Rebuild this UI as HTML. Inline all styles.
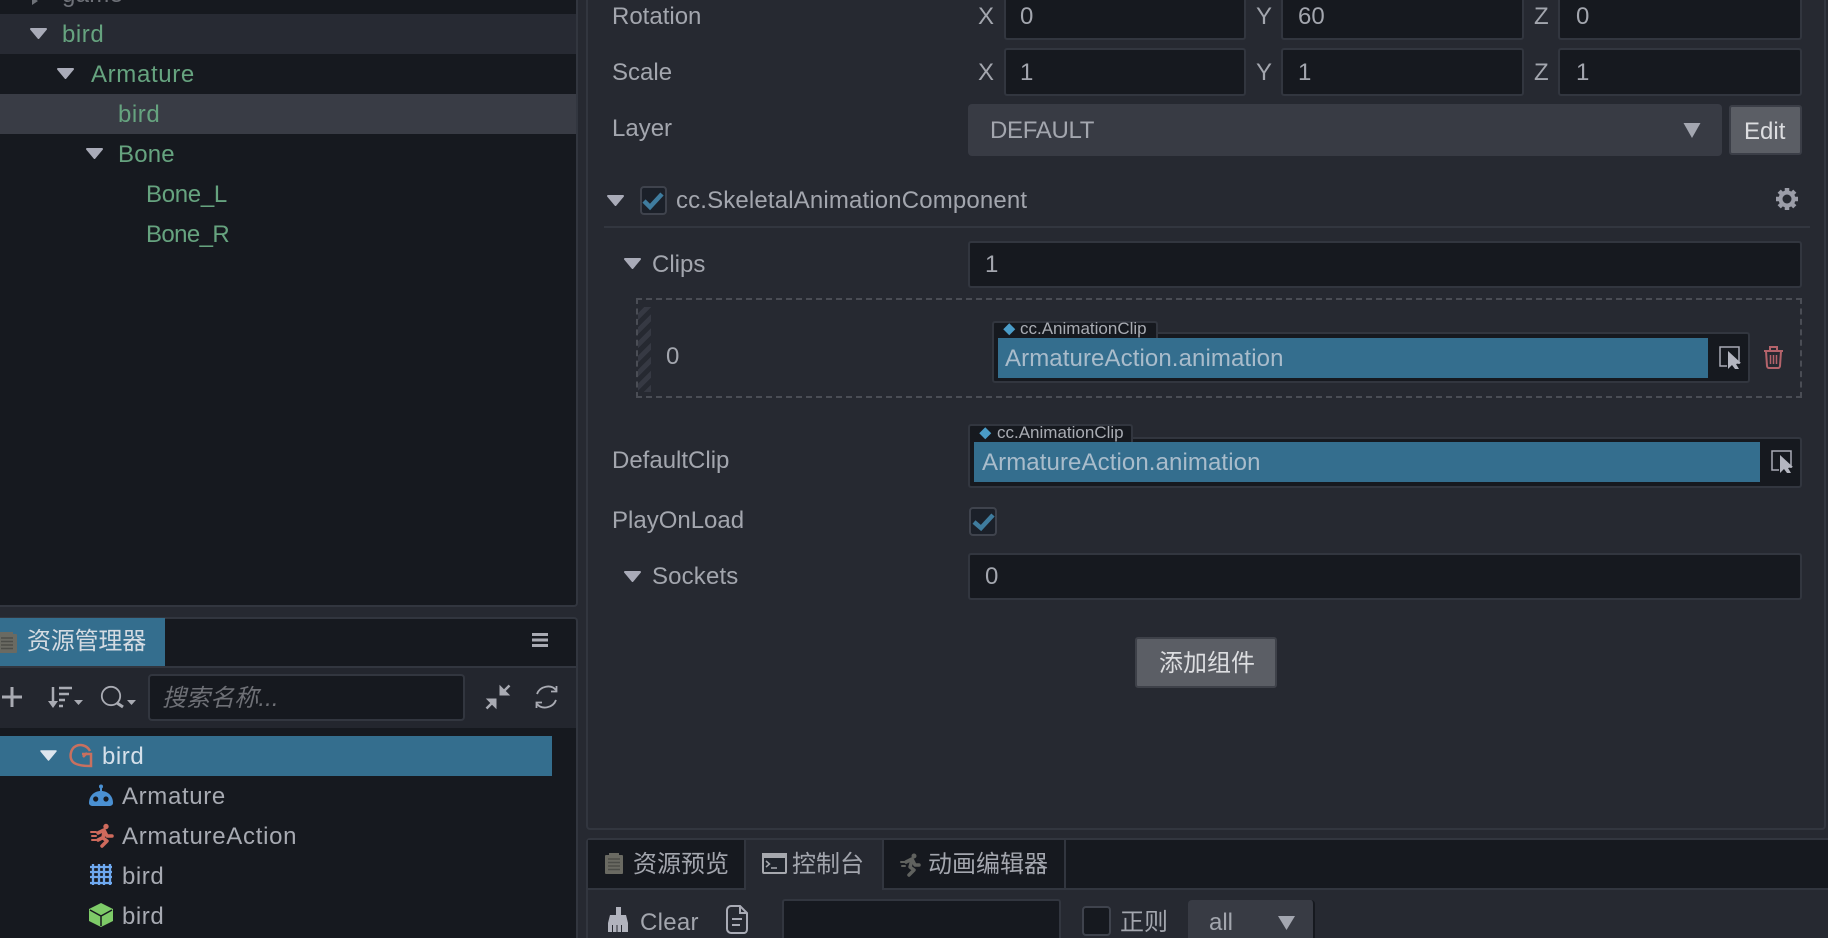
<!DOCTYPE html>
<html><head><meta charset="utf-8">
<style>
html,body{margin:0;padding:0;width:1828px;height:938px;overflow:hidden;background:#262931}
body{position:relative;font-family:"Liberation Sans","Noto Sans CJK SC",sans-serif;font-size:24px;color:#a3a6ae}
.b{position:absolute;box-sizing:border-box}
.t{position:absolute;white-space:nowrap;line-height:40px;height:40px;margin-top:1px}
.tr{letter-spacing:.3px}
.g{color:#66a37f}
.in{position:absolute;box-sizing:border-box;background:#16191f;border:2px solid #32363f;border-radius:3px}
.sm{position:absolute;white-space:nowrap;font-size:17px;line-height:20px;color:#a9acb3}
svg{position:absolute;left:0;top:0}
</style></head>
<body>
<!-- left panels -->
<div class="b" style="left:0;top:-4px;width:578px;height:611px;background:#16191f;border:2px solid #32363f;border-left:0;border-radius:0 4px 4px 0"></div>
<div class="b" style="left:0;top:14px;width:576px;height:40px;background:#272a33"></div>
<div class="b" style="left:0;top:94px;width:576px;height:40px;background:#393c45"></div>
<div class="t tr" style="left:62px;top:-26px;color:#6e7178">game</div>
<div class="t g" style="left:62px;top:14px;letter-spacing:.55px">bird</div>
<div class="t g" style="left:91px;top:54px;letter-spacing:.65px">Armature</div>
<div class="t g" style="left:118px;top:94px;letter-spacing:.55px">bird</div>
<div class="t g" style="left:118px;top:134px;letter-spacing:.2px">Bone</div>
<div class="t g" style="left:146px;top:174px;letter-spacing:-.3px">Bone_L</div>
<div class="t g" style="left:146px;top:214px;letter-spacing:-.6px">Bone_R</div>

<div class="b" style="left:0;top:617px;width:578px;height:330px;background:#16191f;border:2px solid #32363f;border-left:0;border-radius:0 4px 0 0"></div>
<div class="b" style="left:0;top:618px;width:165px;height:48px;background:#346e8e"></div>
<div class="t" style="left:27px;top:621px;color:#d4dbe2;letter-spacing:-.2px">资源管理器</div>
<div class="b" style="left:0;top:666px;width:576px;height:62px;background:#23262e;border-top:2px solid #32363f"></div>
<div class="in" style="left:148px;top:674px;width:317px;height:47px;border-radius:4px"></div>
<div class="t" style="left:162px;top:678px;font-style:italic;color:#6e7076;letter-spacing:.1px">搜索名称...</div>
<div class="b" style="left:0;top:736px;width:552px;height:40px;background:#346e8e"></div>
<div class="t" style="left:102px;top:736px;color:#d5e0ea;letter-spacing:.55px">bird</div>
<div class="t" style="left:122px;top:776px;color:#a7aab2;letter-spacing:.65px">Armature</div>
<div class="t" style="left:122px;top:816px;color:#a7aab2;letter-spacing:.7px">ArmatureAction</div>
<div class="t" style="left:122px;top:856px;color:#a7aab2;letter-spacing:.55px">bird</div>
<div class="t" style="left:122px;top:896px;color:#a7aab2;letter-spacing:.55px">bird</div>

<!-- inspector -->
<div class="b" style="left:586px;top:-4px;width:1240px;height:834px;border:2px solid #32363f;border-radius:4px"></div>
<div class="t" style="left:612px;top:-4px">Rotation</div>
<div class="t" style="left:612px;top:52px">Scale</div>
<div class="t" style="left:612px;top:108px">Layer</div>
<div class="t" style="left:978px;top:-4px">X</div><div class="t" style="left:978px;top:52px">X</div>
<div class="t" style="left:1256px;top:-4px">Y</div><div class="t" style="left:1256px;top:52px">Y</div>
<div class="t" style="left:1534px;top:-4px">Z</div><div class="t" style="left:1534px;top:52px">Z</div>
<div class="in" style="left:1004px;top:-6px;width:242px;height:46px"></div>
<div class="in" style="left:1281px;top:-6px;width:243px;height:46px"></div>
<div class="in" style="left:1558px;top:-6px;width:244px;height:46px"></div>
<div class="in" style="left:1004px;top:48px;width:242px;height:48px"></div>
<div class="in" style="left:1281px;top:48px;width:243px;height:48px"></div>
<div class="in" style="left:1558px;top:48px;width:244px;height:48px"></div>
<div class="t" style="left:1020px;top:-4px">0</div><div class="t" style="left:1298px;top:-4px">60</div><div class="t" style="left:1576px;top:-4px">0</div>
<div class="t" style="left:1020px;top:52px">1</div><div class="t" style="left:1298px;top:52px">1</div><div class="t" style="left:1576px;top:52px">1</div>

<div class="b" style="left:968px;top:104px;width:754px;height:52px;background:#383b44;border-radius:4px"></div>
<div class="t" style="left:990px;top:110px;letter-spacing:-.3px">DEFAULT</div>
<div class="b" style="left:1729px;top:105px;width:73px;height:50px;background:#5b5e65;border:2px solid #3b3e47;border-radius:3px"></div>
<div class="t" style="left:1744px;top:111px;color:#dcdde0">Edit</div>

<div class="b" style="left:640px;top:186px;width:27px;height:29px;background:#1b2029;border:2px solid #3f434d;border-radius:4px"></div>
<div class="t" style="left:676px;top:180px;letter-spacing:.15px">cc.SkeletalAnimationComponent</div>
<div class="b" style="left:604px;top:226px;width:1206px;height:2px;background:#32363f"></div>

<div class="t" style="left:652px;top:244px">Clips</div>
<div class="in" style="left:968px;top:241px;width:834px;height:47px"></div>
<div class="t" style="left:985px;top:244px">1</div>

<div class="b" style="left:636px;top:298px;width:1166px;height:100px;border:2px dashed #4a4d55"></div>
<div class="b" style="left:638px;top:307px;width:13px;height:85px;background:repeating-linear-gradient(-45deg,#363943 0 5px,#262931 5px 10px)"></div>
<div class="t" style="left:666px;top:336px">0</div>

<div class="in" style="left:992px;top:332px;width:758px;height:51px"></div>
<div class="b" style="left:992px;top:321px;width:166px;height:17px;background:#16191f;border:2px solid #32363f;border-bottom:0;border-radius:3px 3px 0 0"></div>
<div class="sm" style="left:1020px;top:319px">cc.AnimationClip</div>
<div class="b" style="left:998px;top:338px;width:710px;height:40px;background:#346e8e"></div>
<div class="t" style="left:1005px;top:338px;color:#a9bccb;letter-spacing:.1px">ArmatureAction.animation</div>

<div class="t" style="left:612px;top:440px">DefaultClip</div>
<div class="in" style="left:968px;top:437px;width:834px;height:51px"></div>
<div class="b" style="left:968px;top:424px;width:165px;height:18px;background:#16191f;border:2px solid #32363f;border-bottom:0;border-radius:3px 3px 0 0"></div>
<div class="sm" style="left:997px;top:423px">cc.AnimationClip</div>
<div class="b" style="left:974px;top:442px;width:786px;height:40px;background:#346e8e"></div>
<div class="t" style="left:982px;top:442px;color:#a9bccb;letter-spacing:.1px">ArmatureAction.animation</div>

<div class="t" style="left:612px;top:500px">PlayOnLoad</div>
<div class="b" style="left:969px;top:507px;width:28px;height:29px;background:#1b2029;border:2px solid #3f434d;border-radius:4px"></div>
<div class="t" style="left:652px;top:556px;letter-spacing:.15px">Sockets</div>
<div class="in" style="left:968px;top:553px;width:834px;height:47px"></div>
<div class="t" style="left:985px;top:556px">0</div>

<div class="b" style="left:1135px;top:637px;width:142px;height:51px;background:#5b5e65;border:2px solid #3e4149;border-radius:3px"></div>
<div class="t" style="left:1159px;top:643px;color:#dcdde0">添加组件</div>

<!-- console -->
<div class="b" style="left:586px;top:838px;width:1260px;height:110px;border:2px solid #32363f;border-radius:4px;background:#262931"></div>
<div class="b" style="left:588px;top:840px;width:158px;height:50px;background:#16191f;border-right:2px solid #32363f;border-bottom:2px solid #32363f"></div>
<div class="b" style="left:882px;top:840px;width:184px;height:50px;background:#16191f;border-left:2px solid #32363f;border-right:2px solid #32363f;border-bottom:2px solid #32363f"></div>
<div class="b" style="left:1066px;top:840px;width:762px;height:50px;background:#16191f;border-bottom:2px solid #32363f"></div>
<div class="t" style="left:633px;top:844px">资源预览</div>
<div class="t" style="left:792px;top:844px">控制台</div>
<div class="t" style="left:928px;top:844px">动画编辑器</div>
<div class="t" style="left:640px;top:902px;letter-spacing:.3px">Clear</div>
<div class="in" style="left:782px;top:899px;width:279px;height:50px"></div>
<div class="b" style="left:1082px;top:906px;width:29px;height:30px;background:#16191f;border:2px solid #3f434d;border-radius:4px"></div>
<div class="t" style="left:1120px;top:902px">正则</div>
<div class="b" style="left:1188px;top:900px;width:127px;height:50px;background:#383b44;border-right:2px solid #16191f;border-radius:4px"></div>
<div class="t" style="left:1209px;top:902px">all</div>

<svg width="1828" height="938" viewBox="0 0 1828 938">
 <defs><g id="tri"><polygon points="0,0 15,0 7.5,9" stroke-linejoin="round" stroke-width="2"/></g></defs>
 <g fill="#a9abb8" stroke="#a9abb8">
  <use href="#tri" x="31" y="29"/><use href="#tri" x="58" y="69"/><use href="#tri" x="87" y="149"/>
  <use href="#tri" x="608" y="196"/><use href="#tri" x="625" y="259"/><use href="#tri" x="625" y="572"/>
 </g>
 <polygon points="32,-3 38,1 32,5" fill="#6e7178"/>
 <polygon points="41,751 56,751 48.500,760" fill="#dde6ee" stroke="#dde6ee" stroke-width="1.500" stroke-linejoin="round"/>
 <polygon points="1683.500,123 1700.500,123 1692,138" fill="#a3a6b0"/>
 <polygon points="1278,916 1295,916 1286.500,930" fill="#a3a6b0"/>

 <!-- tab icon -->
 <g><rect x="-4" y="634" width="21" height="19" rx="1" fill="#6a6a62"/><rect x="-1" y="632" width="14" height="3" fill="#6a6a62"/>
 <path d="M1 638H13M1 641.500H13M1 645H13M1 648.500H13" stroke="#4c4d48" stroke-width="1.500"/></g>
 <!-- hamburger -->
 <path d="M532 634.500H548M532 640H548M532 645.500H548" stroke="#a9abb3" stroke-width="3"/>
 <!-- plus -->
 <path d="M12 687V707M2 697H22" stroke="#a9abb3" stroke-width="3"/>
 <!-- sort -->
 <path d="M53 687V704" stroke="#a9abb3" stroke-width="2.500" fill="none"/><polygon points="48,701 58,701 53,708" fill="#a9abb3"/>
 <path d="M59 688H72M59 694H69M59 700H65M59 706H63" stroke="#a9abb3" stroke-width="2.500"/>
 <polygon points="74,700 83,700 78.500,705" fill="#a9abb3"/>
 <!-- search -->
 <circle cx="111" cy="696" r="9.200" fill="none" stroke="#a9abb3" stroke-width="1.800"/><path d="M117 703L123 707" stroke="#a9abb3" stroke-width="3"/>
 <polygon points="127,700 136,700 131.500,705" fill="#a9abb3"/>
 <!-- compress -->
 <g fill="#a9abb3" stroke="#a9abb3">
  <polygon points="500,695 500,686 509,695" stroke-width="1"/>
  <path d="M503 692L509.500 685.500" stroke-width="2.500"/>
  <polygon points="496,699 496,708 487,699" stroke-width="1"/>
  <path d="M493 702L486.500 708.500" stroke-width="2.500"/>
 </g>
 <!-- refresh -->
 <g fill="none" stroke="#a9abb3" stroke-width="1.800">
  <path d="M537 694C540 686 551 684 556 690M556 700C553 708 542 710 537 704"/>
  <path d="M556.500 686V691.500H551M536.500 708V702.500H542"/>
 </g>
 <!-- G asset icon -->
 <g fill="none" stroke="#c9705f" stroke-width="2.500">
  <path d="M90 751C87 745 80 744 76 746C70 749 69 758 73 762C76 765 82 766 91 766V754H82"/>
  <path d="M87 753L83 757" />
 </g>
 <!-- robot -->
 <g fill="#4a90d2"><circle cx="101" cy="786.500" r="2"/><rect x="100" y="787" width="2" height="5"/>
 <path d="M89 803C89 796 94 791 101 791C108 791 113 796 113 803C113 805 111 806 109 806H93C91 806 89 805 89 803Z"/></g>
 <circle cx="95.700" cy="799" r="2.600" fill="#16191f"/><circle cx="106" cy="799" r="2.600" fill="#16191f"/>
 <!-- runner -->
 <g fill="none" stroke="#cf6a5c" stroke-width="3.500" stroke-linecap="round" stroke-linejoin="round">
  <circle cx="106" cy="826.500" r="2.200" fill="#cf6a5c" stroke-width="1"/>
  <path d="M98 833L104 830L107 836L112 836"/><path d="M104 831L103 838L107 841L102 846"/><path d="M102 838L98 840"/>
  <path d="M91 832H96M92 836H96M92 840H96" stroke-width="2"/>
 </g>
 <!-- grid -->
 <g stroke="#6ea8ef" stroke-width="2.300">
  <path d="M93 864V885M99 864V885M104 864V885M110 864V885M90 867H112M90 872H112M90 877H112M90 883H112"/>
 </g>
 <!-- cube -->
 <path d="M101 903L113 909V921L101 927L89 921V909Z" fill="#7ecb68"/>
 <path d="M90 910L101 916L112 910M101 916V926" fill="none" stroke="#16191f" stroke-width="1.500"/>

 <!-- checks -->
 <polyline points="644,201 650,207 662,194" fill="none" stroke="#3f7c9e" stroke-width="4.500"/>
 <polyline points="974,522 981,528 993,515" fill="none" stroke="#3f7c9e" stroke-width="4.500"/>
 <!-- gear -->
 <g fill="#9b9da8"><circle cx="1787" cy="199" r="8.500"/>
  <g stroke="#9b9da8" stroke-width="4.500"><path d="M1787 188V210M1776 199H1798M1779.200 191.200L1794.800 206.800M1794.800 191.200L1779.200 206.800"/></g></g>
 <circle cx="1787" cy="199" r="4.500" fill="#262931"/>
 <!-- diamonds -->
 <rect x="1005" y="325" width="8.500" height="8.500" transform="rotate(45 1009.250 329.250)" fill="#4a9cc8"/>
 <rect x="981" y="429" width="8.500" height="8.500" transform="rotate(45 985.250 433.250)" fill="#4a9cc8"/>
 <!-- picker -->
 <g id="pk"><path d="M1727 366H1720V347H1739V364" fill="none" stroke="#a9abb5" stroke-width="1.500"/>
  <path d="M1728 351V369L1732 365L1735 369H1739L1736 364L1741 363Z" fill="#b4b6c0"/></g>
 <use href="#pk" x="52" y="104"/>
 <!-- trash -->
 <g fill="none" stroke="#b4636b" stroke-width="2">
  <path d="M1764 351H1783M1770 351V347H1777V351M1766 351L1767 366C1767 367 1768 368 1769 368H1778C1779 368 1780 367 1780 366L1781 351"/>
  <path d="M1770.500 355V364M1773.500 355V364M1776.500 355V364" stroke-width="1.500"/>
 </g>
 <!-- bottom tab icons -->
 <rect x="605" y="855" width="18" height="19" rx="1" fill="#6a6a62"/><rect x="609" y="853" width="10" height="3" fill="#6a6a62"/>
 <path d="M608 859H620M608 862.500H620M608 866H620M608 869.500H620" stroke="#4c4d48" stroke-width="1.400"/>
 <rect x="763" y="854" width="23" height="19" rx="1" fill="#1f242c" stroke="#a6a8ae" stroke-width="2"/><rect x="762" y="853" width="25" height="5" fill="#a6a8ae"/>
 <path d="M766 861L769.500 864L766 867M771 868H777" fill="none" stroke="#a6a8ae" stroke-width="1.500"/>
 <g fill="none" stroke="#60625f" stroke-width="3.500" stroke-linecap="round" stroke-linejoin="round">
  <circle cx="914" cy="856" r="2" fill="#60625f" stroke-width="1"/>
  <path d="M906 862L912 859L915 865L919 865"/><path d="M912 860L910 867L914 870L909 875"/><path d="M901 862H905M902 866H905" stroke-width="2"/>
 </g>
 <!-- broom -->
 <path d="M616 907H621V915H626L628 923V932H608V923L610 915H616Z" fill="#b1b3bd"/>
 <path d="M612.500 925V932M617 925V932M621.500 925V932" stroke="#262931" stroke-width="1"/>
 <!-- doc -->
 <path d="M731 906H740L747 913V929C747 931 746 933 744 933H731C729 933 727 931 727 929V910C727 908 729 906 731 906ZM740 906V913H747M732 919H742M732 925H740" fill="none" stroke="#a9abb5" stroke-width="2"/>
</svg>
</body></html>
